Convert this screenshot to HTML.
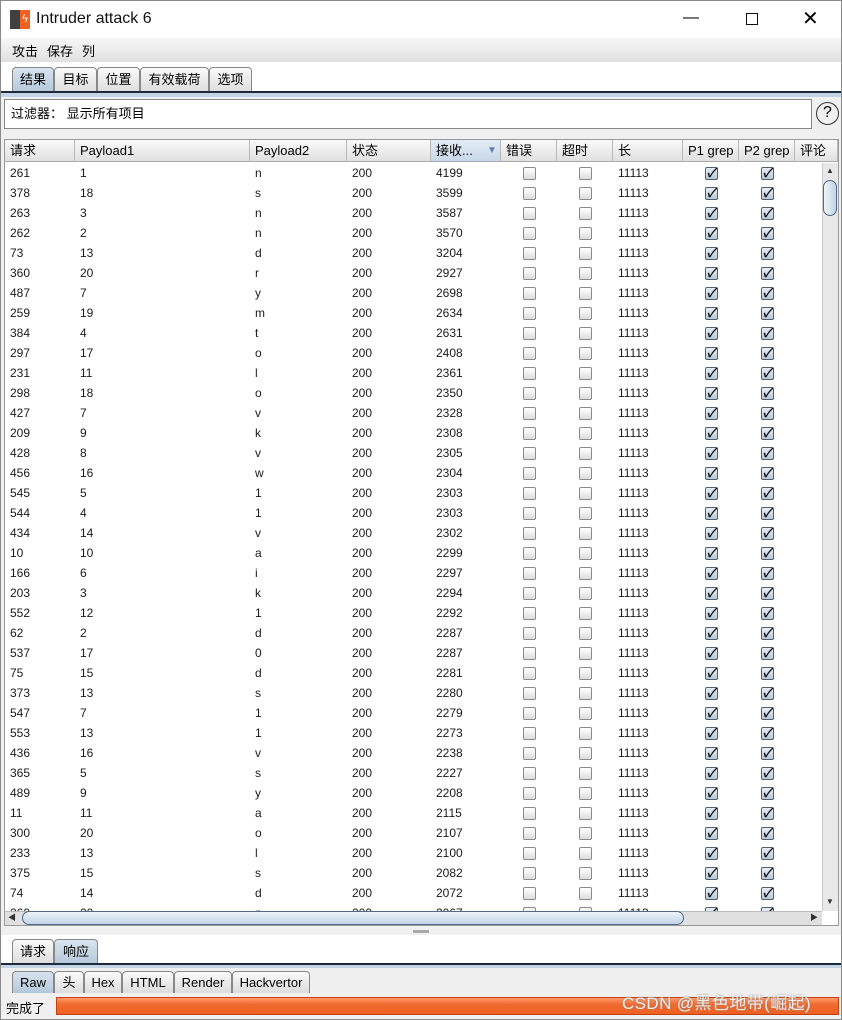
<!DOCTYPE html><html><head><meta charset="utf-8"><style>
*{margin:0;padding:0;box-sizing:border-box}
body{width:842px;height:1020px;background:#fff;font-family:"Liberation Sans","Noto Sans CJK SC",sans-serif;font-size:12px;color:#000;position:relative;overflow:hidden}
.a{position:absolute}
.win{left:0;top:0;width:842px;height:1020px;border:1px solid #8a8a8a;background:#f0f0f0}
.title{left:1px;top:1px;width:840px;height:37px;background:#fff}
.menu{left:1px;top:38px;width:840px;height:24px;background:linear-gradient(#f7f7f7,#e0e0e0);font-size:13px}
.tab{position:absolute;top:67px;height:25px;border:1px solid #888;border-bottom:none;border-radius:4px 4px 0 0;background:linear-gradient(#fafafa,#dcdcdc);font-size:13px;text-align:center;line-height:23px}
.tab.s{background:linear-gradient(#d8e4ef,#b4c8da)}
table{border-collapse:collapse;table-layout:fixed;position:absolute;left:5px;top:163px;font-size:12px}
td{height:20px;padding:0 0 0 5px;white-space:nowrap;overflow:hidden;color:#1a1a1a}
td.c{text-align:center;padding:0}
.u{display:inline-block;width:13px;height:13px;border:1px solid #8a8a8a;border-radius:2px;background:linear-gradient(#fff,#ddd);vertical-align:middle}
.k{display:inline-block;width:13px;height:13px;border:1px solid #506070;border-radius:2px;background:linear-gradient(#e8eef4,#b8c8d8);vertical-align:middle;font-size:12px;line-height:11px;font-weight:bold;color:#000;text-align:center}
.h{position:absolute;top:140px;height:22px;border-right:1px solid #b8b8b8;background:linear-gradient(#fafafa,#e0e0e0);font-size:13px;line-height:22px;padding-left:5px;border-bottom:1px solid #aaa}
.bt{position:absolute;top:971px;height:22px;border:1px solid #888;border-bottom:none;border-radius:4px 4px 0 0;background:linear-gradient(#fafafa,#dcdcdc);font-size:13px;text-align:center;line-height:22px}
</style></head><body>
<div class="a win"></div>
<div class="a title"></div>
<div class="a" style="left:10px;top:10px;width:20px;height:19px;background:#404040"></div>
<div class="a" style="left:20px;top:10px;width:10px;height:19px;background:#f06020;color:#fff;font-size:11px;line-height:19px;text-align:center">ϟ</div>
<div class="a" style="left:36px;top:10px;font-size:16px;color:#111">Intruder attack 6</div>
<div class="a" style="left:683px;top:9px;font-size:16px">—</div>
<div class="a" style="left:746px;top:13px;width:12px;height:12px;border:1.5px solid #111"></div>
<div class="a" style="left:802px;top:6px;font-size:20px;font-weight:300">✕</div>
<div class="a menu"><span class="a" style="left:11px;top:3px">攻击</span><span class="a" style="left:46px;top:3px">保存</span><span class="a" style="left:81px;top:3px">列</span></div>
<div class="a" style="left:1px;top:62px;width:840px;height:30px;background:#fff"></div>
<div class="tab s" style="left:12px;width:42px">结果</div>
<div class="tab" style="left:54px;width:43px">目标</div>
<div class="tab" style="left:97px;width:43px">位置</div>
<div class="tab" style="left:140px;width:69px">有效载荷</div>
<div class="tab" style="left:209px;width:43px">选项</div>
<div class="a" style="left:1px;top:91px;width:840px;height:2px;background:#1a2a3a"></div>
<div class="a" style="left:1px;top:93px;width:840px;height:4px;background:#c4d4e4"></div>
<div class="a" style="left:4px;top:99px;width:808px;height:30px;border:1px solid #888;background:#fff;font-size:13px;line-height:28px;padding-left:6px">过滤器：&nbsp;显示所有项目</div>
<div class="a" style="left:816px;top:102px;width:23px;height:23px;border:1.5px solid #333;border-radius:50%;text-align:center;font-size:16px;line-height:20px">?</div>
<div class="a" style="left:4px;top:139px;width:835px;height:787px;border:1px solid #999;background:#fff"></div>
<div class="h" style="left:5px;width:70px">请求</div>
<div class="h" style="left:75px;width:175px">Payload1</div>
<div class="h" style="left:250px;width:97px">Payload2</div>
<div class="h" style="left:347px;width:84px">状态</div>
<div class="h" style="left:431px;width:70px;background:linear-gradient(#e4edf6,#c8d8e8)">接收...<span style="position:absolute;left:56px;top:0;color:#5a80b0;font-size:10px">▼</span></div>
<div class="h" style="left:501px;width:56px">错误</div>
<div class="h" style="left:557px;width:56px">超时</div>
<div class="h" style="left:613px;width:70px">长</div>
<div class="h" style="left:683px;width:56px">P1 grep</div>
<div class="h" style="left:739px;width:56px">P2 grep</div>
<div class="h" style="left:795px;width:43px">评论</div>
<div class="a" style="left:5px;top:163px;width:817px;height:748px;overflow:hidden">
<table style="left:0;top:0">
<colgroup><col style="width:70px"><col style="width:175px"><col style="width:97px"><col style="width:84px"><col style="width:70px"><col style="width:56px"><col style="width:56px"><col style="width:70px"><col style="width:56px"><col style="width:56px"><col style="width:27px"></colgroup>
<tbody>
<tr><td>261</td><td>1</td><td>n</td><td>200</td><td>4199</td><td class="c"><i class="u"></i></td><td class="c"><i class="u"></i></td><td>11113</td><td class="c"><i class="k">✓</i></td><td class="c"><i class="k">✓</i></td><td></td></tr>
<tr><td>378</td><td>18</td><td>s</td><td>200</td><td>3599</td><td class="c"><i class="u"></i></td><td class="c"><i class="u"></i></td><td>11113</td><td class="c"><i class="k">✓</i></td><td class="c"><i class="k">✓</i></td><td></td></tr>
<tr><td>263</td><td>3</td><td>n</td><td>200</td><td>3587</td><td class="c"><i class="u"></i></td><td class="c"><i class="u"></i></td><td>11113</td><td class="c"><i class="k">✓</i></td><td class="c"><i class="k">✓</i></td><td></td></tr>
<tr><td>262</td><td>2</td><td>n</td><td>200</td><td>3570</td><td class="c"><i class="u"></i></td><td class="c"><i class="u"></i></td><td>11113</td><td class="c"><i class="k">✓</i></td><td class="c"><i class="k">✓</i></td><td></td></tr>
<tr><td>73</td><td>13</td><td>d</td><td>200</td><td>3204</td><td class="c"><i class="u"></i></td><td class="c"><i class="u"></i></td><td>11113</td><td class="c"><i class="k">✓</i></td><td class="c"><i class="k">✓</i></td><td></td></tr>
<tr><td>360</td><td>20</td><td>r</td><td>200</td><td>2927</td><td class="c"><i class="u"></i></td><td class="c"><i class="u"></i></td><td>11113</td><td class="c"><i class="k">✓</i></td><td class="c"><i class="k">✓</i></td><td></td></tr>
<tr><td>487</td><td>7</td><td>y</td><td>200</td><td>2698</td><td class="c"><i class="u"></i></td><td class="c"><i class="u"></i></td><td>11113</td><td class="c"><i class="k">✓</i></td><td class="c"><i class="k">✓</i></td><td></td></tr>
<tr><td>259</td><td>19</td><td>m</td><td>200</td><td>2634</td><td class="c"><i class="u"></i></td><td class="c"><i class="u"></i></td><td>11113</td><td class="c"><i class="k">✓</i></td><td class="c"><i class="k">✓</i></td><td></td></tr>
<tr><td>384</td><td>4</td><td>t</td><td>200</td><td>2631</td><td class="c"><i class="u"></i></td><td class="c"><i class="u"></i></td><td>11113</td><td class="c"><i class="k">✓</i></td><td class="c"><i class="k">✓</i></td><td></td></tr>
<tr><td>297</td><td>17</td><td>o</td><td>200</td><td>2408</td><td class="c"><i class="u"></i></td><td class="c"><i class="u"></i></td><td>11113</td><td class="c"><i class="k">✓</i></td><td class="c"><i class="k">✓</i></td><td></td></tr>
<tr><td>231</td><td>11</td><td>l</td><td>200</td><td>2361</td><td class="c"><i class="u"></i></td><td class="c"><i class="u"></i></td><td>11113</td><td class="c"><i class="k">✓</i></td><td class="c"><i class="k">✓</i></td><td></td></tr>
<tr><td>298</td><td>18</td><td>o</td><td>200</td><td>2350</td><td class="c"><i class="u"></i></td><td class="c"><i class="u"></i></td><td>11113</td><td class="c"><i class="k">✓</i></td><td class="c"><i class="k">✓</i></td><td></td></tr>
<tr><td>427</td><td>7</td><td>v</td><td>200</td><td>2328</td><td class="c"><i class="u"></i></td><td class="c"><i class="u"></i></td><td>11113</td><td class="c"><i class="k">✓</i></td><td class="c"><i class="k">✓</i></td><td></td></tr>
<tr><td>209</td><td>9</td><td>k</td><td>200</td><td>2308</td><td class="c"><i class="u"></i></td><td class="c"><i class="u"></i></td><td>11113</td><td class="c"><i class="k">✓</i></td><td class="c"><i class="k">✓</i></td><td></td></tr>
<tr><td>428</td><td>8</td><td>v</td><td>200</td><td>2305</td><td class="c"><i class="u"></i></td><td class="c"><i class="u"></i></td><td>11113</td><td class="c"><i class="k">✓</i></td><td class="c"><i class="k">✓</i></td><td></td></tr>
<tr><td>456</td><td>16</td><td>w</td><td>200</td><td>2304</td><td class="c"><i class="u"></i></td><td class="c"><i class="u"></i></td><td>11113</td><td class="c"><i class="k">✓</i></td><td class="c"><i class="k">✓</i></td><td></td></tr>
<tr><td>545</td><td>5</td><td>1</td><td>200</td><td>2303</td><td class="c"><i class="u"></i></td><td class="c"><i class="u"></i></td><td>11113</td><td class="c"><i class="k">✓</i></td><td class="c"><i class="k">✓</i></td><td></td></tr>
<tr><td>544</td><td>4</td><td>1</td><td>200</td><td>2303</td><td class="c"><i class="u"></i></td><td class="c"><i class="u"></i></td><td>11113</td><td class="c"><i class="k">✓</i></td><td class="c"><i class="k">✓</i></td><td></td></tr>
<tr><td>434</td><td>14</td><td>v</td><td>200</td><td>2302</td><td class="c"><i class="u"></i></td><td class="c"><i class="u"></i></td><td>11113</td><td class="c"><i class="k">✓</i></td><td class="c"><i class="k">✓</i></td><td></td></tr>
<tr><td>10</td><td>10</td><td>a</td><td>200</td><td>2299</td><td class="c"><i class="u"></i></td><td class="c"><i class="u"></i></td><td>11113</td><td class="c"><i class="k">✓</i></td><td class="c"><i class="k">✓</i></td><td></td></tr>
<tr><td>166</td><td>6</td><td>i</td><td>200</td><td>2297</td><td class="c"><i class="u"></i></td><td class="c"><i class="u"></i></td><td>11113</td><td class="c"><i class="k">✓</i></td><td class="c"><i class="k">✓</i></td><td></td></tr>
<tr><td>203</td><td>3</td><td>k</td><td>200</td><td>2294</td><td class="c"><i class="u"></i></td><td class="c"><i class="u"></i></td><td>11113</td><td class="c"><i class="k">✓</i></td><td class="c"><i class="k">✓</i></td><td></td></tr>
<tr><td>552</td><td>12</td><td>1</td><td>200</td><td>2292</td><td class="c"><i class="u"></i></td><td class="c"><i class="u"></i></td><td>11113</td><td class="c"><i class="k">✓</i></td><td class="c"><i class="k">✓</i></td><td></td></tr>
<tr><td>62</td><td>2</td><td>d</td><td>200</td><td>2287</td><td class="c"><i class="u"></i></td><td class="c"><i class="u"></i></td><td>11113</td><td class="c"><i class="k">✓</i></td><td class="c"><i class="k">✓</i></td><td></td></tr>
<tr><td>537</td><td>17</td><td>0</td><td>200</td><td>2287</td><td class="c"><i class="u"></i></td><td class="c"><i class="u"></i></td><td>11113</td><td class="c"><i class="k">✓</i></td><td class="c"><i class="k">✓</i></td><td></td></tr>
<tr><td>75</td><td>15</td><td>d</td><td>200</td><td>2281</td><td class="c"><i class="u"></i></td><td class="c"><i class="u"></i></td><td>11113</td><td class="c"><i class="k">✓</i></td><td class="c"><i class="k">✓</i></td><td></td></tr>
<tr><td>373</td><td>13</td><td>s</td><td>200</td><td>2280</td><td class="c"><i class="u"></i></td><td class="c"><i class="u"></i></td><td>11113</td><td class="c"><i class="k">✓</i></td><td class="c"><i class="k">✓</i></td><td></td></tr>
<tr><td>547</td><td>7</td><td>1</td><td>200</td><td>2279</td><td class="c"><i class="u"></i></td><td class="c"><i class="u"></i></td><td>11113</td><td class="c"><i class="k">✓</i></td><td class="c"><i class="k">✓</i></td><td></td></tr>
<tr><td>553</td><td>13</td><td>1</td><td>200</td><td>2273</td><td class="c"><i class="u"></i></td><td class="c"><i class="u"></i></td><td>11113</td><td class="c"><i class="k">✓</i></td><td class="c"><i class="k">✓</i></td><td></td></tr>
<tr><td>436</td><td>16</td><td>v</td><td>200</td><td>2238</td><td class="c"><i class="u"></i></td><td class="c"><i class="u"></i></td><td>11113</td><td class="c"><i class="k">✓</i></td><td class="c"><i class="k">✓</i></td><td></td></tr>
<tr><td>365</td><td>5</td><td>s</td><td>200</td><td>2227</td><td class="c"><i class="u"></i></td><td class="c"><i class="u"></i></td><td>11113</td><td class="c"><i class="k">✓</i></td><td class="c"><i class="k">✓</i></td><td></td></tr>
<tr><td>489</td><td>9</td><td>y</td><td>200</td><td>2208</td><td class="c"><i class="u"></i></td><td class="c"><i class="u"></i></td><td>11113</td><td class="c"><i class="k">✓</i></td><td class="c"><i class="k">✓</i></td><td></td></tr>
<tr><td>11</td><td>11</td><td>a</td><td>200</td><td>2115</td><td class="c"><i class="u"></i></td><td class="c"><i class="u"></i></td><td>11113</td><td class="c"><i class="k">✓</i></td><td class="c"><i class="k">✓</i></td><td></td></tr>
<tr><td>300</td><td>20</td><td>o</td><td>200</td><td>2107</td><td class="c"><i class="u"></i></td><td class="c"><i class="u"></i></td><td>11113</td><td class="c"><i class="k">✓</i></td><td class="c"><i class="k">✓</i></td><td></td></tr>
<tr><td>233</td><td>13</td><td>l</td><td>200</td><td>2100</td><td class="c"><i class="u"></i></td><td class="c"><i class="u"></i></td><td>11113</td><td class="c"><i class="k">✓</i></td><td class="c"><i class="k">✓</i></td><td></td></tr>
<tr><td>375</td><td>15</td><td>s</td><td>200</td><td>2082</td><td class="c"><i class="u"></i></td><td class="c"><i class="u"></i></td><td>11113</td><td class="c"><i class="k">✓</i></td><td class="c"><i class="k">✓</i></td><td></td></tr>
<tr><td>74</td><td>14</td><td>d</td><td>200</td><td>2072</td><td class="c"><i class="u"></i></td><td class="c"><i class="u"></i></td><td>11113</td><td class="c"><i class="k">✓</i></td><td class="c"><i class="k">✓</i></td><td></td></tr>
<tr><td>260</td><td>20</td><td>n</td><td>200</td><td>2067</td><td class="c"><i class="u"></i></td><td class="c"><i class="u"></i></td><td>11113</td><td class="c"><i class="k">✓</i></td><td class="c"><i class="k">✓</i></td><td></td></tr>
</tbody></table></div>
<div class="a" style="left:822px;top:163px;width:16px;height:748px;background:#e8e8e8;border-left:1px solid #ccc"></div>
<div class="a" style="left:826px;top:166px;font-size:8px;color:#333">▲</div>
<div class="a" style="left:823px;top:180px;width:14px;height:36px;border:1px solid #506a88;border-radius:7px;background:linear-gradient(90deg,#eef4fa,#c0d4e8)"></div>
<div class="a" style="left:826px;top:897px;font-size:8px;color:#333">▼</div>
<div class="a" style="left:5px;top:911px;width:817px;height:14px;background:#e0e0e0;border-top:1px solid #bbb"></div>
<div class="a" style="left:8px;top:912px;font-size:8px;color:#333">◀</div>
<div class="a" style="left:22px;top:911px;width:662px;height:14px;border:1px solid #506a88;border-radius:7px;background:linear-gradient(#eef4fa,#c0d4e8)"></div>
<div class="a" style="left:810px;top:912px;font-size:8px;color:#333">▶</div>
<div class="a" style="left:413px;top:930px;width:16px;height:3px;background:#aaa"></div>
<div class="a" style="left:1px;top:935px;width:840px;height:29px;background:#fff"></div>
<div class="bt" style="top:939px;left:12px;width:42px;height:25px;line-height:24px">请求</div>
<div class="bt s" style="top:939px;left:54px;width:44px;height:25px;line-height:24px;background:linear-gradient(#d8e4ef,#b4c8da)">响应</div>
<div class="a" style="left:1px;top:963px;width:840px;height:2px;background:#1a2a3a"></div>
<div class="a" style="left:1px;top:965px;width:840px;height:3px;background:#c4d4e4"></div>
<div class="bt" style="left:12px;width:42px;background:linear-gradient(#d8e4ef,#b4c8da)">Raw</div>
<div class="bt" style="left:54px;width:30px">头</div>
<div class="bt" style="left:84px;width:38px">Hex</div>
<div class="bt" style="left:122px;width:52px">HTML</div>
<div class="bt" style="left:174px;width:58px">Render</div>
<div class="bt" style="left:232px;width:78px">Hackvertor</div>
<div class="a" style="left:1px;top:993px;width:840px;height:26px;background:#f0f0f0"></div>
<div class="a" style="left:6px;top:998px;font-size:13px">完成了</div>
<div class="a" style="left:56px;top:997px;width:783px;height:18px;border:1px solid #c04010;background:linear-gradient(#ff9a6a,#f06a30 40%,#f06020)"></div>
<div class="a" style="left:622px;top:989px;font-size:17px;letter-spacing:0.4px;color:rgba(255,255,255,.85);text-shadow:0 0 2px #888">CSDN @黑色地带(崛起)</div>
</body></html>
